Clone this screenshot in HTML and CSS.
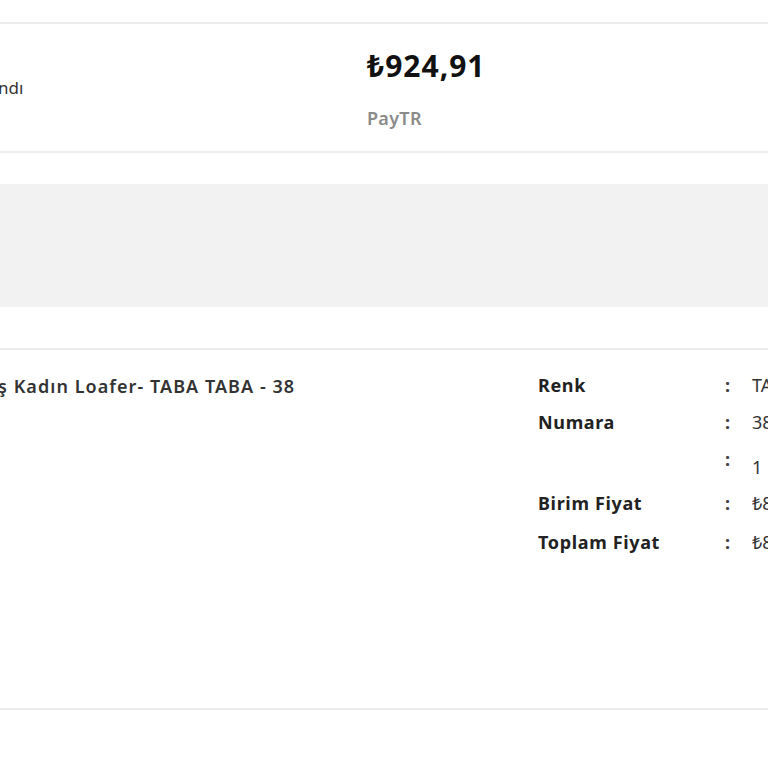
FILE: index.html
```html
<!DOCTYPE html>
<html lang="tr">
<head>
<meta charset="utf-8">
<link rel="stylesheet" href="styles.css">
</head>
<body>
<div class="page">
  <div class="top-space"></div>
  <section class="order-summary">
    <div class="status">ndı</div>
    <div class="payment">
      <div class="amount">₺924,91</div>
      <div class="method">PayTR</div>
    </div>
  </section>
  <div class="gap"></div>
  <div class="banner"></div>
  <div class="gap2"></div>
  <section class="product">
    <div class="product-name">ş Kadın Loafer- TABA TABA - 38</div>
    <div class="details">
      <div class="row"><span class="label">Renk</span><span class="colon">:</span><span class="value">TABA</span></div>
      <div class="row"><span class="label">Numara</span><span class="colon">:</span><span class="value">38</span></div>
      <div class="row qty"><span class="label"></span><span class="colon">:</span><span class="value">1</span></div>
      <div class="row tall"><span class="label">Birim Fiyat</span><span class="colon">:</span><span class="value">₺899,91</span></div>
      <div class="row"><span class="label">Toplam Fiyat</span><span class="colon">:</span><span class="value">₺899,91</span></div>
    </div>
  </section>
</div>
</body>
</html>
```
FILE: styles.css
```css
html, body {
  margin: 0;
  padding: 0;
  background: #fff;
  overflow: hidden;
}
body {
  font-family: "Noto Sans", "Open Sans", sans-serif;
  color: #333;
}
.page {
  width: 768px;
  height: 768px;
  overflow: hidden;
}
.top-space {
  height: 22px;
}
.order-summary {
  border-top: 2px solid #ececec;
  border-bottom: 2px solid #ececec;
  height: 127px;
  display: flex;
  align-items: center;
}
.status {
  font-size: 17px;
  width: 369px;
  flex-shrink: 0;
  color: #333;
  margin-left: -2px;
}
.payment {
  display: flex;
  flex-direction: column;
  gap: 24px;
  flex-shrink: 0;
  padding-top: 2px;
}
.amount {
  font-size: 30px;
  font-weight: 700;
  color: #111;
  line-height: 34px;
  letter-spacing: 1px;
}
.method {
  font-size: 18px;
  font-weight: 600;
  color: #8a8a8a;
  line-height: 22px;
  letter-spacing: 0.3px;
}
.gap {
  height: 31px;
}
.banner {
  height: 123px;
  background: #f2f2f2;
}
.gap2 {
  height: 41px;
}
.product {
  border-top: 2px solid #ececec;
  border-bottom: 2px solid #ececec;
  height: 358px;
  display: flex;
  align-items: flex-start;
}
.product-name {
  width: 540px;
  flex-shrink: 0;
  margin-left: -2px;
  margin-top: 24px;
  font-size: 18px;
  font-weight: 600;
  color: #333;
  line-height: 24px;
  white-space: nowrap;
  letter-spacing: 1.05px;
}
.details {
  margin-top: 23px;
  display: flex;
  flex-direction: column;
  flex-shrink: 0;
  width: 400px;
}
.row {
  display: grid;
  grid-template-columns: 187px 27px auto;
  height: 37px;
  font-size: 18px;
  line-height: 24px;
  white-space: nowrap;
}
.row .label {
  font-weight: 700;
  color: #222;
  letter-spacing: 0.65px;
}
.row .colon {
  color: #444;
  font-weight: 700;
}
.row .value {
  color: #333;
}
.row.qty {
  height: 44px;
}
.row.qty .value {
  margin-top: 8px;
}
.row.tall {
  height: 39px;
}
```
